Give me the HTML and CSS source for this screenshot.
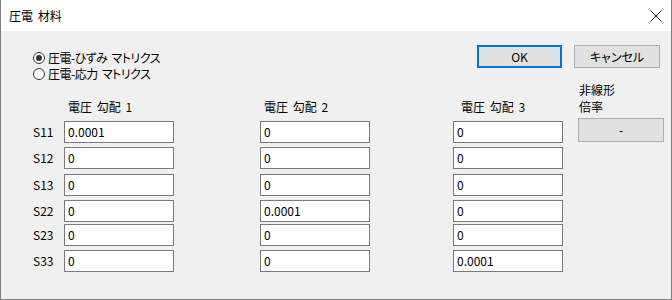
FILE: index.html
```html
<!DOCTYPE html>
<html lang="ja">
<head>
<meta charset="utf-8">
<link rel="stylesheet" href="styles.css">
</head>
<body>
<div class="window">
  <div class="titlebar">
    <span class="title">圧電 材料</span>
    <svg class="close" width="12" height="12" viewBox="0 0 12 12"><path d="M0.5 0.5 L11.5 11.5 M11.5 0.5 L0.5 11.5" stroke="#111" stroke-width="1" fill="none"/></svg>
  </div>
  <div class="content">
    <div class="top">
      <div class="radios">
        <div class="radio"><span class="circle checked"></span><span class="rtext">圧電-ひずみ マトリクス</span></div>
        <div class="radio"><span class="circle"></span><span class="rtext">圧電-応力 マトリクス</span></div>
      </div>
      <div class="buttons">
        <div class="btn ok">OK</div>
        <div class="btn cancel">キャンセル</div>
      </div>
    </div>
    <div class="grid">
      <div class="head c1">電圧 勾配 1</div>
      <div class="head c2">電圧 勾配 2</div>
      <div class="head c3">電圧 勾配 3</div>
      <div class="side-label">非線形<br>倍率</div>
      <div class="btn side-btn">-</div>

      <div class="lbl r1">S11</div>
      <div class="box r1 c1">0.0001</div>
      <div class="box r1 c2">0</div>
      <div class="box r1 c3">0</div>

      <div class="lbl r2">S12</div>
      <div class="box r2 c1">0</div>
      <div class="box r2 c2">0</div>
      <div class="box r2 c3">0</div>

      <div class="lbl r3">S13</div>
      <div class="box r3 c1">0</div>
      <div class="box r3 c2">0</div>
      <div class="box r3 c3">0</div>

      <div class="lbl r4">S22</div>
      <div class="box r4 c1">0</div>
      <div class="box r4 c2">0.0001</div>
      <div class="box r4 c3">0</div>

      <div class="lbl r5">S23</div>
      <div class="box r5 c1">0</div>
      <div class="box r5 c2">0</div>
      <div class="box r5 c3">0</div>

      <div class="lbl r6">S33</div>
      <div class="box r6 c1">0</div>
      <div class="box r6 c2">0</div>
      <div class="box r6 c3">0.0001</div>
    </div>
  </div>
</div>
</body>
</html>
```

FILE: styles.css
```css
* { box-sizing: border-box; }
html, body { margin: 0; padding: 0; }
body {
  font-family: "Noto Sans CJK JP", "Noto Sans", sans-serif;
  font-size: 12px;
  font-feature-settings: "palt";
  color: #000;
  width: 672px;
  height: 300px;
  overflow: hidden;
}
.window {
  width: 672px;
  height: 300px;
  border: 1px solid #7f7f7f;
  border-top: none;
  background: #f0f0f0;
  display: flex;
  flex-direction: column;
}
.titlebar {
  height: 31px;
  background: #fff;
  display: flex;
  align-items: center;
  justify-content: space-between;
  padding: 0 9px 0 8px;
}
.title { line-height: 16px; word-spacing: 2px; }
.content {
  flex: 1;
  padding-left: 32px;
  padding-right: 11px;
}
.top {
  display: flex;
  justify-content: space-between;
  padding-top: 14px;
}
.radios { margin-top: 5px; }
.radio {
  display: flex;
  align-items: center;
  height: 16px;
  line-height: 16px;
}
.rtext { letter-spacing: -0.5px; word-spacing: 2px; }
.circle {
  width: 12px;
  height: 12px;
  border: 1px solid #333;
  border-radius: 50%;
  background: #fff;
  margin-right: 3px;
  display: flex;
  align-items: center;
  justify-content: center;
}
.circle.checked::after {
  content: "";
  width: 6px;
  height: 6px;
  border-radius: 50%;
  background: #333;
}
.buttons { display: flex; gap: 12px; }
.btn {
  background: #e1e1e1;
  border: 1px solid #adadad;
  height: 23px;
  display: flex;
  align-items: center;
  justify-content: center;
  line-height: 16px;
}
.ok { width: 85px; border: 2px solid #0078d7; }
.cancel { width: 86px; }
.grid {
  display: grid;
  grid-template-columns: 31px 110px 86px 110px 83px 110px 15px 86px;
  grid-template-rows: 39px 26px 27px 26px 24px 26px 22px;
}
.head {
  grid-row: 1;
  align-self: end;
  margin-bottom: 6px;
  line-height: 16px;
  padding-left: 4px;
  word-spacing: 2px;
}
.head.c3 { padding-left: 8px; }
.c1 { grid-column: 2; }
.c2 { grid-column: 4; }
.c3 { grid-column: 6; }
.r1 { grid-row: 2; }
.r2 { grid-row: 3; }
.r3 { grid-row: 4; }
.r4 { grid-row: 5; }
.r5 { grid-row: 6; }
.r6 { grid-row: 7; }
.lbl {
  grid-column: 1;
  align-self: start;
  line-height: 21px;
}
.box {
  align-self: start;
  height: 22px;
  border: 1px solid #7a7a7a;
  background: #fff;
  padding-left: 3px;
  line-height: 20px;
}
.side-label {
  grid-column: 8;
  grid-row: 1;
  align-self: start;
  line-height: 17px;
  margin-top: -1px;
  padding-left: 1px;
}
.side-btn {
  grid-column: 8;
  grid-row: 2;
  align-self: start;
  margin-top: -3px;
  height: 24px;
}
```
